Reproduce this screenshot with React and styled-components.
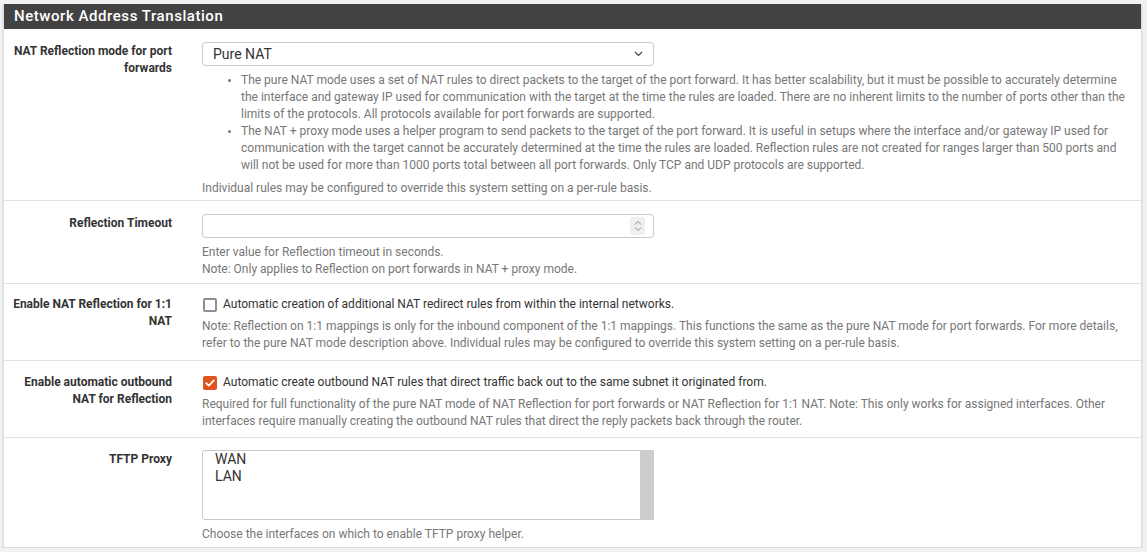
import React from "react";
import styled, { createGlobalStyle } from "styled-components";

const GlobalStyle = createGlobalStyle`
  body {
    margin: 0;
    background: #f1f1f1;
    font-family: Roboto, "Liberation Sans", Arial, sans-serif;
  }
`;

const Page = styled.div`
  padding: 4px 5px 0 3px;
`;

const Panel = styled.section`
  background: #fff;
  border: 1px solid #dcdcdc;
  border-top: none;
  box-shadow: 0 1px 2px rgba(0, 0, 0, 0.12);
`;

const PanelHeading = styled.h2`
  margin: 0;
  height: 25px;
  background: #424242;
  color: #fff;
  font-size: 15px;
  font-weight: 500;
  letter-spacing: 0.55px;
  line-height: 25px;
  padding-left: 10px;
`;

const Row = styled.div`
  display: grid;
  grid-template-columns: 184px 1fr;
  padding: ${(p) => p.$top || 13}px 0 ${(p) => p.$bottom || 7}px;
  border-top: ${(p) => (p.$first ? "none" : "1px solid #e2e2e2")};
`;

const Label = styled.div`
  text-align: right;
  padding: ${(p) => p.$top || 0}px 16px 0 8px;
  font-size: 12px;
  font-weight: 700;
  line-height: 17px;
  color: #333;
`;

const Control = styled.div`
  padding: 0 12px 0 14px;
  min-width: 0;
`;

const SelectBox = styled.div`
  box-sizing: border-box;
  width: 452px;
  height: 24px;
  border: 1px solid #c9c9c9;
  border-radius: 4px;
  display: flex;
  align-items: center;
  justify-content: space-between;
  padding: 0 10px 0 10px;
  font-size: 14px;
  color: #333;
  background: #fff;
`;

const NumberBox = styled(SelectBox)`
  padding-right: 8px;
`;

const Spinner = styled.div`
  width: 15px;
  height: 18px;
  background: #efeff2;
  border-radius: 2px;
  display: flex;
  align-items: center;
  justify-content: center;
`;

const Help = styled.div`
  font-size: 12px;
  line-height: 17px;
  color: #777;
  margin-top: ${(p) => p.$gap || 6}px;
`;

const Bullets = styled.ul`
  margin: 0 0 6px;
  padding-left: 39px;
  list-style: disc;
  & li::marker {
    font-size: 10px;
  }
`;

const CheckLine = styled.label`
  display: flex;
  align-items: center;
  gap: 6px;
  font-size: 12px;
  line-height: 17px;
  color: #333;
`;

const Box = styled.span`
  box-sizing: border-box;
  width: 14px;
  height: 14px;
  flex: none;
  border-radius: 2px;
  margin-left: 1px;
  display: flex;
  align-items: center;
  justify-content: center;
  background: ${(p) => (p.$checked ? "#e0521e" : "#fff")};
  border: ${(p) => (p.$checked ? "none" : "2px solid #8f8f8f")};
`;

const MultiSelect = styled.div`
  box-sizing: border-box;
  width: 452px;
  height: 70px;
  border: 1px solid #c9c9c9;
  border-radius: 3px 0 0 3px;
  display: flex;
  background: #fff;
`;

const Options = styled.div`
  flex: 1;
  padding: 0 12px;
  font-size: 14px;
  line-height: 17px;
  color: #333;
`;

const Scrollbar = styled.div`
  width: 14px;
  background: #cdcdcd;
  margin: -1px -1px -1px 0;
`;

const Chevron = () => (
  <svg width="9" height="6" viewBox="0 0 9 6">
    <path d="M1 1l3.5 3.5L8 1" fill="none" stroke="#444" strokeWidth="1.2" />
  </svg>
);

const SpinArrows = () => (
  <svg width="8" height="12" viewBox="0 0 8 12">
    <path d="M1 4.5l3-3 3 3M1 7.5l3 3 3-3" fill="none" stroke="#888" strokeWidth="1" />
  </svg>
);

const Tick = () => (
  <svg width="10" height="8" viewBox="0 0 10 8">
    <path d="M1.2 4.2l2.6 2.4L8.8 1.4" fill="none" stroke="#fff" strokeWidth="1.8" strokeLinecap="round" strokeLinejoin="round" />
  </svg>
);

export default function App() {
  return (
    <Page>
      <GlobalStyle />
      <Panel>
        <PanelHeading>Network Address Translation</PanelHeading>

        <Row $first $bottom={3}>
          <Label $top={1}>NAT Reflection mode for port forwards</Label>
          <Control>
            <SelectBox>
              <span>Pure NAT</span>
              <Chevron />
            </SelectBox>
            <Help $gap={6}>
              <Bullets>
                <li>
                  The pure NAT mode uses a set of NAT rules to direct packets to the target of the port forward. It has better scalability, but it must be possible to accurately determine the interface and gateway IP used for communication with the target at the time the rules are loaded. There are no inherent limits to the number of ports other than the limits of the protocols. All protocols available for port forwards are supported.
                </li>
                <li>
                  The NAT + proxy mode uses a helper program to send packets to the target of the port forward. It is useful in setups where the interface and/or gateway IP used for communication with the target cannot be accurately determined at the time the rules are loaded. Reflection rules are not created for ranges larger than 500 ports and will not be used for more than 1000 ports total between all port forwards. Only TCP and UDP protocols are supported.
                </li>
              </Bullets>
              Individual rules may be configured to override this system setting on a per-rule basis.
            </Help>
          </Control>
        </Row>

        <Row $bottom={5}>
          <Label $top={1}>Reflection Timeout</Label>
          <Control>
            <NumberBox>
              <span />
              <Spinner>
                <SpinArrows />
              </Spinner>
            </NumberBox>
            <Help>
              Enter value for Reflection timeout in seconds.
              <br />
              Note: Only applies to Reflection on port forwards in NAT + proxy mode.
            </Help>
          </Control>
        </Row>

        <Row $top={12} $bottom={8}>
          <Label>Enable NAT Reflection for 1:1 NAT</Label>
          <Control>
            <CheckLine>
              <Box />
              Automatic creation of additional NAT redirect rules from within the internal networks.
            </CheckLine>
            <Help $gap={5}>
              Note: Reflection on 1:1 mappings is only for the inbound component of the 1:1 mappings. This functions the same as the pure NAT mode for port forwards. For more details, refer to the pure NAT mode description above. Individual rules may be configured to override this system setting on a per-rule basis.
            </Help>
          </Control>
        </Row>

        <Row $top={13} $bottom={7}>
          <Label>Enable automatic outbound NAT for Reflection</Label>
          <Control>
            <CheckLine>
              <Box $checked>
                <Tick />
              </Box>
              Automatic create outbound NAT rules that direct traffic back out to the same subnet it originated from.
            </CheckLine>
            <Help $gap={5}>
              Required for full functionality of the pure NAT mode of NAT Reflection for port forwards or NAT Reflection for 1:1 NAT. Note: This only works for assigned interfaces. Other interfaces require manually creating the outbound NAT rules that direct the reply packets back through the router.
            </Help>
          </Control>
        </Row>

        <Row $top={12} $bottom={4}>
          <Label $top={1}>TFTP Proxy</Label>
          <Control>
            <MultiSelect>
              <Options>
                <div>WAN</div>
                <div>LAN</div>
              </Options>
              <Scrollbar />
            </MultiSelect>
            <Help>Choose the interfaces on which to enable TFTP proxy helper.</Help>
          </Control>
        </Row>
      </Panel>
    </Page>
  );
}
